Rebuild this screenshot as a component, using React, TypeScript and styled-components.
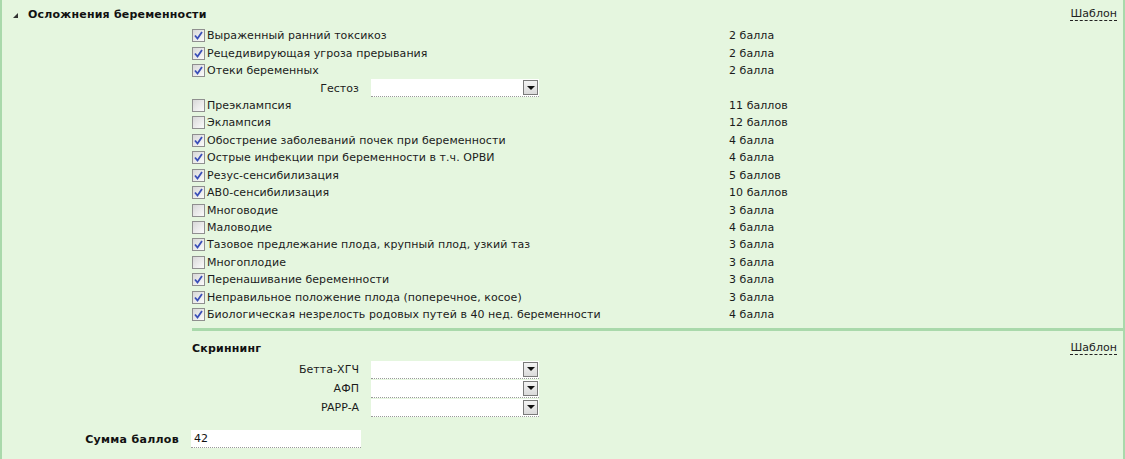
import React from "react";
import styled, { createGlobalStyle } from "styled-components";

const Global = createGlobalStyle`
  html, body { margin: 0; padding: 0; background: #e5f6df; }
  body { font-family: "DejaVu Sans", Verdana, sans-serif; font-size: 11px; color: #1b1b1b; }
`;

const Panel = styled.div`
  box-sizing: border-box;
  width: 1125px;
  height: 459px;
  background: #e5f6df;
  border-left: 2px solid #a9d9ab;
  border-right: 2px solid #a9d9ab;
  letter-spacing: 0.05px;
`;

const HeaderRow = styled.div<{ $indent: number; $top: number }>`
  display: flex;
  align-items: center;
  justify-content: space-between;
  height: 18px;
  padding: ${(p) => p.$top}px 6px 0 ${(p) => p.$indent}px;
`;

const Title = styled.div`
  display: flex;
  align-items: center;
  gap: 10px;
  font-weight: bold;
  color: #111;
  letter-spacing: 0.2px;
`;

const Triangle = styled.span`
  width: 0;
  height: 0;
  border-left: 5px solid transparent;
  border-bottom: 5px solid #333;
  margin-top: 2px;
`;

const TemplateLink = styled.span`
  color: #222;
  border-bottom: 1px dashed #222;
  line-height: 13px;
  cursor: pointer;
`;

const Section = styled.div`
  margin-left: 188px;
  padding-top: 4px;
`;

const Row = styled.div`
  display: grid;
  grid-template-columns: 539px auto;
  align-items: center;
  height: 17.44px;
`;

const CheckLabel = styled.label`
  display: flex;
  align-items: center;
  gap: 1px;
  padding-left: 2px;
  white-space: nowrap;
`;

const Box = styled.span`
  box-sizing: border-box;
  width: 13px;
  height: 13px;
  border: 1px solid #8f8f8f;
  background: linear-gradient(135deg, #d8d8d8, #fbfbfb);
  display: inline-flex;
  align-items: center;
  justify-content: center;
  margin-right: 1px;
`;

const Score = styled.span`
  color: #1b1b1b;
`;

const FieldRow = styled.div<{ $h: number }>`
  display: grid;
  grid-template-columns: 169px 168px;
  column-gap: 12px;
  align-items: center;
  height: ${(p) => p.$h}px;
`;

const FieldLabel = styled.span`
  text-align: right;
`;

const SelectBox = styled.div`
  box-sizing: border-box;
  position: relative;
  height: 18px;
  background: #fff;
  border-bottom: 1px dotted #9a9a9a;
`;

const DropBtn = styled.span`
  position: absolute;
  right: 1px;
  top: 1px;
  box-sizing: border-box;
  width: 15px;
  height: 15px;
  border: 1px solid #7a7a7a;
  background: linear-gradient(#f4f4f4, #dadada);
  display: flex;
  align-items: center;
  justify-content: center;
  &::after {
    content: "";
    border-left: 4px solid transparent;
    border-right: 4px solid transparent;
    border-top: 4px solid #111;
  }
`;

const Separator = styled.div`
  height: 3px;
  background: #a9d9ab;
  margin: 5px 0 0 2px;
`;

const SubTitle = styled.div`
  font-weight: bold;
  color: #111;
  letter-spacing: 0.2px;
`;

const ScreenHeader = styled.div`
  display: flex;
  justify-content: space-between;
  align-items: center;
  height: 18px;
  margin-top: 8px;
  padding: 0 6px 0 2px;
`;

const Fields = styled.div`
  padding-top: 3px;
`;

const SumRow = styled.div`
  display: grid;
  grid-template-columns: 177px 170px;
  column-gap: 12px;
  align-items: center;
  margin-top: 13px;
  height: 18px;
`;

const SumLabel = styled.span`
  text-align: right;
  font-weight: bold;
  color: #111;
  letter-spacing: 0.3px;
`;

const InputBox = styled.div`
  box-sizing: border-box;
  height: 18px;
  background: #fff;
  border-bottom: 1px dotted #9a9a9a;
  padding: 2px 3px;
  color: #111;
`;

function Check({ on }: { on: boolean }) {
  return (
    <Box>
      {on && (
        <svg width="9" height="9" viewBox="0 0 9 9">
          <path d="M1 4.5 L3.5 7.5 L8 1" fill="none" stroke="#3a4fb8" strokeWidth="1.8" />
        </svg>
      )}
    </Box>
  );
}

const items: [string, string, boolean][] = [
  ["Выраженный ранний токсикоз", "2 балла", true],
  ["Рецедивирующая угроза прерывания", "2 балла", true],
  ["Отеки беременных", "2 балла", true],
  ["GESTOZ", "", false],
  ["Преэклампсия", "11 баллов", false],
  ["Эклампсия", "12 баллов", false],
  ["Обострение заболеваний почек при беременности", "4 балла", true],
  ["Острые инфекции при беременности в т.ч. ОРВИ", "4 балла", true],
  ["Резус-сенсибилизация", "5 баллов", true],
  ["АВ0-сенсибилизация", "10 баллов", true],
  ["Многоводие", "3 балла", false],
  ["Маловодие", "4 балла", false],
  ["Тазовое предлежание плода, крупный плод, узкий таз", "3 балла", true],
  ["Многоплодие", "3 балла", false],
  ["Перенашивание беременности", "3 балла", true],
  ["Неправильное положение плода (поперечное, косое)", "3 балла", true],
  ["Биологическая незрелость родовых путей в 40 нед. беременности", "4 балла", true],
];

export default function App() {
  return (
    <Panel>
      <Global />
      <HeaderRow $indent={11} $top={5}>
        <Title>
          <Triangle />
          Осложнения беременности
        </Title>
        <TemplateLink>Шаблон</TemplateLink>
      </HeaderRow>
      <Section>
        {items.map(([label, score, on]) =>
          label === "GESTOZ" ? (
            <FieldRow key={label} $h={17.44}>
              <FieldLabel>Гестоз</FieldLabel>
              <SelectBox>
                <DropBtn />
              </SelectBox>
            </FieldRow>
          ) : (
            <Row key={label}>
              <CheckLabel>
                <Check on={on} />
                {label}
              </CheckLabel>
              <Score>{score}</Score>
            </Row>
          )
        )}
        <Separator />
        <ScreenHeader>
          <SubTitle>Скриннинг</SubTitle>
          <TemplateLink>Шаблон</TemplateLink>
        </ScreenHeader>
        <Fields>
          {["Бетта-ХГЧ", "АФП", "PAPP-A"].map((l) => (
            <FieldRow key={l} $h={19}>
              <FieldLabel>{l}</FieldLabel>
              <SelectBox>
                <DropBtn />
              </SelectBox>
            </FieldRow>
          ))}
        </Fields>
      </Section>
      <SumRow>
        <SumLabel>Сумма баллов</SumLabel>
        <InputBox>42</InputBox>
      </SumRow>
    </Panel>
  );
}
